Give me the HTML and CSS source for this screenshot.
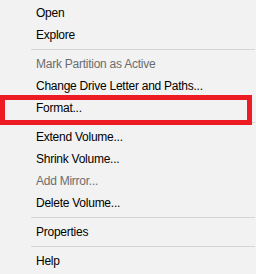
FILE: index.html
```html
<!DOCTYPE html>
<html lang="en">
<head>
    <meta charset="UTF-8">
    <title>Volume Menu</title>
    <link rel="stylesheet" href="styles.css">
</head>
<body>
    <div class="menu">
        <div class="item">Open</div>
        <div class="item">Explore</div>
        <div class="sep"></div>
        <div class="item disabled">Mark Partition as Active</div>
        <div class="item">Change Drive Letter and Paths...</div>
        <div class="item">Format...</div>
        <div class="sep"></div>
        <div class="item">Extend Volume...</div>
        <div class="item">Shrink Volume...</div>
        <div class="item disabled">Add Mirror...</div>
        <div class="item">Delete Volume...</div>
        <div class="sep"></div>
        <div class="item">Properties</div>
        <div class="sep"></div>
        <div class="item">Help</div>

        <!-- annotation drawn over the Format item -->
        <div class="highlight"></div>
    </div>
</body>
</html>
```

FILE: styles.css
```css
body {
    margin: 0;
    background-color: #f2f2f2;
    font-family: "Liberation Sans", Arial, sans-serif;
    font-size: 12px;
    letter-spacing: -0.25px;
    color: #000;
}
.menu {
    position: relative;
    width: 256px;
    height: 274px;
    padding-top: 2px;
    box-sizing: border-box;
    overflow: hidden;
}
.item {
    height: 22px;
    line-height: 22px;
    padding-left: 36px;
    white-space: nowrap;
}
.item.disabled {
    color: #6d6d6d;
}
.sep {
    height: 7px;
    display: flex;
    align-items: center;
    padding-left: 31px;
    padding-right: 1px;
}
.sep::after {
    content: "";
    flex-grow: 1;
    height: 1px;
    background-color: #d4d4d4;
}
.highlight {
    position: absolute;
    left: 0;
    top: 95px;
    width: 252px;
    height: 30px;
    border: 5px solid #ed1c24;
    box-sizing: border-box;
}
```
